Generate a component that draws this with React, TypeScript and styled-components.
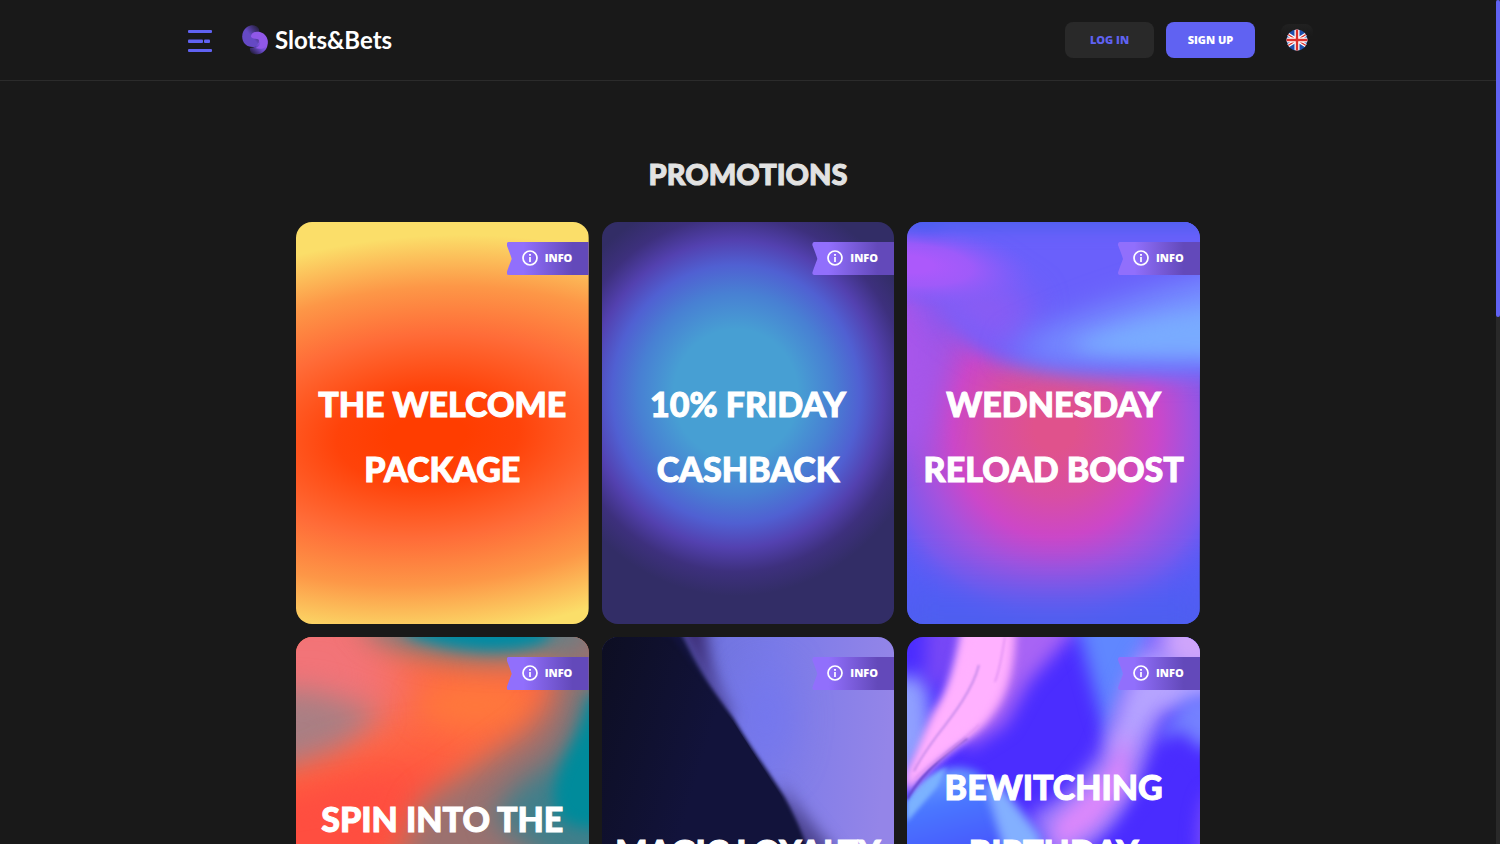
import React from "react";
import styled, { createGlobalStyle } from "styled-components";

const GlobalStyle = createGlobalStyle`
  *, *::before, *::after { box-sizing: border-box; }
  body {
    margin: 0;
    background: #191919;
    color: #fff;
    font-family: Lato, "Open Sans", sans-serif;
  }
`;

const Page = styled.div`
  display: grid;
  grid-template-columns: minmax(0, 1fr) 4px;
  height: 100vh;
`;

const Scroller = styled.div`
  overflow-y: auto;
  scrollbar-width: none;
`;

const Track = styled.div`
  background: #292929;
`;

const Thumb = styled.div`
  height: 37.5%;
  border-radius: 2px;
  background: #6062f2;
`;

const Header = styled.header`
  border-bottom: 1px solid #2b2b2b;
`;

const HeaderInner = styled.div`
  display: flex;
  align-items: center;
  max-width: 1130px;
  height: 80px;
  margin: 0 auto;
`;

const IconButton = styled.button`
  display: flex;
  padding: 4px 5px;
  border: 0;
  background: none;
  cursor: pointer;
`;

const Brand = styled.a`
  display: flex;
  align-items: center;
  gap: 7px;
  margin: 0 auto 0 25px;
  color: #fff;
  font-size: 24px;
  font-weight: 700;
  line-height: 32px;
  text-decoration: none;
`;

const Actions = styled.div`
  display: flex;
  align-items: center;
  gap: 12px;
`;

const ActionButton = styled.button<{ $primary?: boolean }>`
  width: 89px;
  height: 36px;
  padding: 0 0 2px;
  border: 0;
  border-radius: 8px;
  background: ${(p) => (p.$primary ? "#6062f2" : "#292929")};
  color: ${(p) => (p.$primary ? "#fff" : "#6062f2")};
  font-family: "Open Sans", sans-serif;
  font-size: 11px;
  font-weight: 800;
  cursor: pointer;
`;

const LanguageButton = styled.button`
  display: flex;
  align-items: center;
  justify-content: center;
  width: 32px;
  height: 32px;
  margin-left: 14px;
  padding: 0;
  border: 0;
  border-radius: 8px;
  background: linear-gradient(#212121, #191919 40%);
  cursor: pointer;
`;

const Main = styled.main`
  max-width: 904px;
  margin: 0 auto;
  padding: 73px 0 80px;
`;

const Heading = styled.h1`
  margin: 0 0 28px;
  color: #e2e2e2;
  font-size: 29px;
  font-weight: 900;
  line-height: 40px;
  text-align: center;
  text-transform: uppercase;
  -webkit-text-stroke: 1px currentColor;
`;

const Grid = styled.div`
  display: grid;
  grid-template-columns: repeat(3, minmax(0, 1fr));
  gap: 13px;
`;

const Card = styled.article`
  position: relative;
  display: flex;
  align-items: center;
  justify-content: center;
  height: 402px;
  padding-top: 26px;
  border-radius: 16px;
  overflow: hidden;
`;

const Art = styled.svg`
  position: absolute;
  inset: 0;
  width: 100%;
  height: 100%;
`;

const CardTitle = styled.h2`
  position: relative;
  margin: 0;
  color: #fff;
  font-size: 34px;
  font-weight: 900;
  line-height: 65px;
  text-align: center;
  text-transform: uppercase;
  white-space: pre-line;
  -webkit-text-stroke: 1px currentColor;
`;

const InfoLink = styled.a`
  position: absolute;
  top: 20px;
  right: 0;
  display: flex;
  align-items: center;
  gap: 7px;
  width: 82px;
  height: 33px;
  padding: 0 0 1px 15px;
  background: linear-gradient(90deg, #916ffc 20%, #6349ba 80%);
  clip-path: path("M2 0H82V33H2Q0 33 0 31Q0 30 5 17Q5 16 0 3Q0 0 2 0Z");
  color: #fff;
  font-family: "Open Sans", sans-serif;
  font-size: 11px;
  font-weight: 800;
  text-decoration: none;
`;

const InfoLabel = styled.span`
  padding-bottom: 2px;
`;

const MenuIcon = () => (
  <svg width="24" height="26" viewBox="0 0 24 26" fill="#6062f2" aria-hidden="true">
    <rect x="0" y="3" width="24" height="3" rx="1" />
    <rect x="0" y="12.5" width="15" height="3.5" rx="1" />
    <rect x="16" y="12.5" width="6" height="3.5" rx="1" />
    <rect x="0" y="22" width="24" height="3" rx="1" />
  </svg>
);

const LogoMark = () => (
  <svg width="26" height="32" viewBox="0 0 26 32" aria-hidden="true">
    <defs>
      <linearGradient id="tailTop" x1="0.9" y1="0" x2="0.4" y2="0.5">
        <stop offset="0" stopColor="#1f1b30" />
        <stop offset="0.9" stopColor="#6549c4" />
      </linearGradient>
      <linearGradient id="tailBottom" x1="0" y1="0.9" x2="0.7" y2="0.2">
        <stop offset="0" stopColor="#1d1930" />
        <stop offset="0.6" stopColor="#6a4bca" />
        <stop offset="1" stopColor="#9058e8" />
      </linearGradient>
    </defs>
    <path d="M17 5C15 .5 9 .5 5 3C-1 7-1 16 3 20C6 23 11 24 16 22L18 12Z" fill="url(#tailTop)" />
    <path d="M17 15C17 21 13 24 8 24C7 29 12 31 17 30C24 28 27 22 25 15Z" fill="url(#tailBottom)" />
    <path d="M9 13C9 8 14 7 18 8C25 10 27 17 25 21C22 26 17 25 13 24C17 23 20 19 17 16C15 14 12 16 9 13Z" fill="#9058e8" />
  </svg>
);

const FlagIcon = () => (
  <svg width="22" height="22" viewBox="0 0 22 22" aria-hidden="true">
    <defs>
      <clipPath id="flagRound">
        <circle cx="11" cy="11" r="10.5" />
      </clipPath>
    </defs>
    <g clipPath="url(#flagRound)">
      <rect width="22" height="22" fill="#1f50ac" />
      <path d="M-2 3L24 19M24 3L-2 19" stroke="#fff" strokeWidth="3.6" />
      <path d="M-2 3L24 19M24 3L-2 19" stroke="#d9302c" strokeWidth="1.3" />
      <path d="M11 0V22M0 11H22" stroke="#fff" strokeWidth="5" />
      <path d="M11 0V22M0 11H22" stroke="#d9302c" strokeWidth="2.4" />
    </g>
  </svg>
);

const InfoIcon = () => (
  <svg width="16" height="16" viewBox="0 0 16 16" fill="none" stroke="#fff" aria-hidden="true">
    <circle cx="8" cy="8" r="7" strokeWidth="1.7" />
    <path d="M8 7V12" strokeWidth="1.7" />
    <path d="M8 4V5.8" strokeWidth="1.9" />
  </svg>
);

const Blur = ({ id, size }: { id: string; size: number }) => (
  <filter id={id} x="-150%" y="-150%" width="400%" height="400%" colorInterpolationFilters="sRGB">
    <feGaussianBlur stdDeviation={size} />
  </filter>
);

const artProps = { viewBox: "0 0 293 402", preserveAspectRatio: "none", "aria-hidden": true } as const;

const WelcomeArt = () => (
  <Art {...artProps}>
    <defs>
      <radialGradient id="ember" gradientUnits="userSpaceOnUse" cx="0" cy="0" r="1" gradientTransform="translate(132 214) rotate(-4) scale(380 204)">
        <stop offset="0.1" stopColor="#ff3d00" />
        <stop offset="0.24" stopColor="#ff430a" />
        <stop offset="0.5" stopColor="#ff6c38" />
        <stop offset="0.73" stopColor="#fd9747" />
        <stop offset="0.98" stopColor="#fbde69" />
      </radialGradient>
    </defs>
    <rect width="293" height="402" fill="url(#ember)" />
  </Art>
);

const FridayArt = () => (
  <Art {...artProps}>
    <defs>
      <radialGradient id="orb" gradientUnits="userSpaceOnUse" cx="0" cy="0" r="1" gradientTransform="translate(134 172) scale(194 202)">
        <stop offset="0.32" stopColor="#479fd3" />
        <stop offset="0.5" stopColor="#4880d3" />
        <stop offset="0.64" stopColor="#5060d2" />
        <stop offset="0.76" stopColor="#5341b0" />
        <stop offset="0.88" stopColor="#3d307d" />
        <stop offset="1" stopColor="#322d66" />
      </radialGradient>
    </defs>
    <rect width="293" height="402" fill="url(#orb)" />
  </Art>
);

const WednesdayArt = () => (
  <Art {...artProps}>
    <defs>
      <Blur id="wedWide" size={28} />
      <Blur id="wedSoft" size={16} />
      <Blur id="wedThin" size={9} />
      <radialGradient id="rose" gradientUnits="userSpaceOnUse" cx="0" cy="0" r="1" gradientTransform="translate(148 206) scale(205 218)">
        <stop offset="0.1" stopColor="#e0528c" />
        <stop offset="0.32" stopColor="#d84ea4" />
        <stop offset="0.5" stopColor="#cc47c8" />
        <stop offset="0.65" stopColor="#a552de" />
        <stop offset="0.82" stopColor="#7a59ee" />
        <stop offset="1" stopColor="#575cf8" stopOpacity="0" />
      </radialGradient>
      <radialGradient id="violet" gradientUnits="userSpaceOnUse" cx="0" cy="0" r="1" gradientTransform="translate(0 42) rotate(5) scale(130 42)">
        <stop offset="0.2" stopColor="#ac59fb" />
        <stop offset="0.5" stopColor="#a55afa" stopOpacity="0.85" />
        <stop offset="1" stopColor="#7f5efb" stopOpacity="0" />
      </radialGradient>
    </defs>
    <rect width="293" height="402" fill="#575cf8" />
    <rect width="293" height="402" fill="url(#rose)" />
    <path d="M-50 60H20L35 130L20 220L-50 240Z" fill="#a856ea" filter="url(#wedSoft)" />
    <path d="M30 -20H320V150C240 158 150 156 100 140C72 128 55 115 40 90Z" fill="#6a60fb" filter="url(#wedThin)" />
    <path d="M10 40H70L130 80L100 135L60 112L20 80Z" fill="#885cf4" filter="url(#wedSoft)" />
    <rect width="160" height="120" fill="url(#violet)" />
    <path d="M330 50C250 65 140 105 100 130C170 148 280 140 330 142Z" fill="#7794ff" filter="url(#wedSoft)" />
    <path d="M330 85C260 90 190 110 165 126C210 136 280 132 330 134Z" fill="#79abff" filter="url(#wedThin)" />
    <rect x="-30" y="-30" width="353" height="36" fill="#4c60ee" filter="url(#wedThin)" />
    <rect x="-30" y="375" width="353" height="70" fill="#4b5fee" filter="url(#wedWide)" />
  </Art>
);

const SpinArt = () => (
  <Art {...artProps}>
    <defs>
      <Blur id="spinWide" size={24} />
      <Blur id="spinSoft" size={14} />
      <Blur id="spinThin" size={7} />
    </defs>
    <rect width="293" height="402" fill="#ff6a42" />
    <path d="M-60 -40H70L120 60L60 100H-60Z" fill="#f27478" filter="url(#spinWide)" />
    <path d="M-60 50L20 54L85 76L40 115L-60 150Z" fill="#a97f84" filter="url(#spinSoft)" />
    <path d="M-60 170L60 130L170 115L60 280H-60Z" fill="#ff4e40" filter="url(#spinWide)" />
    <path d="M-60 175L30 160L90 150L50 280H-60Z" fill="#ff4e40" filter="url(#spinSoft)" />
    <ellipse cx="180" cy="68" rx="56" ry="22" fill="#ff783c" filter="url(#spinSoft)" />
    <path d="M330 -20H252L258 60L235 92L180 130L125 165L100 230L140 420H330Z" fill="#9b716f" filter="url(#spinSoft)" />
    <path d="M330 50H288C278 110 262 125 225 145L195 180L270 240H330Z" fill="#3f7f8b" filter="url(#spinSoft)" />
    <path d="M330 60H294C285 105 260 125 258 160C262 190 275 192 330 192Z" fill="#008b9b" filter="url(#spinThin)" />
    <path d="M60 -20H310L270 16C210 30 130 22 80 0Z" fill="#5d8189" filter="url(#spinSoft)" />
    <path d="M108 -20H262L250 4C220 18 160 16 112 -2Z" fill="#008ba3" filter="url(#spinThin)" />
  </Art>
);

const MagicArt = () => (
  <Art {...artProps}>
    <defs>
      <Blur id="magicSoft" size={8} />
      <Blur id="magicEdge" size={2} />
      <Blur id="magicHaze" size={20} />
      <linearGradient id="lilac" x1="0.3" y1="0" x2="1" y2="0.1">
        <stop offset="0" stopColor="#6e72dc" />
        <stop offset="0.4" stopColor="#797ae8" />
        <stop offset="1" stopColor="#9485e8" />
      </linearGradient>
      <linearGradient id="night" x1="0" y1="0" x2="0.5" y2="0.3">
        <stop offset="0" stopColor="#0d0e22" />
        <stop offset="1" stopColor="#12133b" />
      </linearGradient>
    </defs>
    <rect width="293" height="402" fill="url(#lilac)" />
    <ellipse cx="165" cy="80" rx="20" ry="50" fill="#7376f0" filter="url(#magicHaze)" />
    <path d="M70 -20H104C104 28 116 56 131 81L120 80Z" fill="#3b2c74" filter="url(#magicSoft)" />
    <path d="M176 145L234 216V240H200Z" fill="#4c4490" filter="url(#magicSoft)" />
    <path d="M-20 -20H72C90 20 108 52 130 81C146 108 164 134 181 160C194 184 202 204 210 235V422H-20Z" fill="#12133b" filter="url(#magicEdge)" />
    <path d="M0 0H70C90 30 112 57 131 82C147 110 166 134 182 160C194 182 204 204 212 230V402H0Z" fill="url(#night)" filter="url(#magicEdge)" />
    <path d="M0 0H60L131 84L180 160L204 240V402H0Z" fill="url(#night)" />
  </Art>
);

const BirthdayArt = () => (
  <Art {...artProps}>
    <defs>
      <Blur id="bdSoft" size={9} />
      <Blur id="bdMid" size={5} />
      <Blur id="bdThin" size={2} />
      <Blur id="bdLine" size={1} />
      <linearGradient id="petal" x1="0" y1="0" x2="1" y2="0">
        <stop offset="0" stopColor="#f9a2f6" />
        <stop offset="0.5" stopColor="#ffb1ff" />
        <stop offset="1" stopColor="#ee9af8" />
      </linearGradient>
      <linearGradient id="lagoon" x1="0" y1="0" x2="0.3" y2="1">
        <stop offset="0" stopColor="#80b4ff" />
        <stop offset="0.4" stopColor="#4a78ff" />
        <stop offset="1" stopColor="#4650fc" />
      </linearGradient>
    </defs>
    <rect width="293" height="402" fill="#4b2dff" />
    <path d="M-40 40H20L26 110L-40 190Z" fill="#90a0ff" filter="url(#bdSoft)" />
    <path d="M20 -20H65L40 50L18 48Z" fill="#7848f6" filter="url(#bdSoft)" />
    <path d="M95 -30H190L150 14L122 45L98 88L60 112L50 90Z" fill="#a864f5" filter="url(#bdSoft)" />
    <path d="M165 -30H250L245 40L205 110L192 70L178 18Z" fill="#6087ff" filter="url(#bdSoft)" />
    <path d="M320 -30H255L215 50L190 120L160 155L120 180L150 230L215 190C240 150 240 110 262 75L320 45Z" fill="#9579fc" filter="url(#bdSoft)" />
    <path d="M320 20H235L220 60L204 110L218 125L250 72L320 60Z" fill="#b6a4ff" filter="url(#bdSoft)" />
    <path d="M222 90L195 140L145 185L150 215L190 190L222 150Z" fill="#dc88fb" filter="url(#bdSoft)" />
    <ellipse cx="290" cy="5" rx="32" ry="25" fill="#cfa5fb" filter="url(#bdSoft)" />
    <path d="M330 55L280 58L252 98L275 110L330 115Z" fill="#7582ff" filter="url(#bdSoft)" />
    <path d="M275 92C255 105 250 135 235 155C220 180 195 200 190 240H290L310 150Z" fill="#4a2cff" filter="url(#bdSoft)" />
    <ellipse cx="306" cy="205" rx="14" ry="50" fill="#8253f8" filter="url(#bdSoft)" />
    <path d="M-10 176C20 132 45 124 72 136C92 160 105 195 110 240H-10Z" fill="url(#lagoon)" filter="url(#bdMid)" />
    <path d="M0 165C12 146 24 138 40 130L30 150L0 185Z" fill="#7bb2ff" filter="url(#bdThin)" />
    <path d="M78 148L92 145L134 200V240H105Z" fill="#83b0ff" filter="url(#bdMid)" />
    <path d="M54 -10H109C108 40 99 64 78 87C54 109 20 128 0 156V136C12 118 18 96 26 76C42 52 48 24 54 -10Z" fill="url(#petal)" filter="url(#bdMid)" />
    <path d="M62 -10H104C104 36 94 62 74 84C52 106 20 124 0 154V140C12 118 20 96 32 76C48 52 54 24 62 -10Z" fill="#ffb1ff" filter="url(#bdMid)" />
    <path d="M60 101C36 118 14 138 0 162" fill="none" stroke="#5f3bc4" strokeWidth="2" filter="url(#bdLine)" />
    <path d="M72 28C66 52 48 76 29 100C18 115 12 124 7 134" fill="none" stroke="#c78bea" strokeWidth="2" filter="url(#bdLine)" />
    <path d="M98 0C95 20 92 35 88 45M72 88C56 106 30 120 8 142" fill="none" stroke="#e597f5" strokeWidth="2" filter="url(#bdLine)" />
  </Art>
);

const promotions = [
  { id: "welcome", title: "The Welcome\nPackage", Picture: WelcomeArt },
  { id: "friday", title: "10% Friday\nCashback", Picture: FridayArt },
  { id: "wednesday", title: "Wednesday\nReload Boost", Picture: WednesdayArt },
  { id: "spin", title: "Spin into the\nWeekend", Picture: SpinArt },
  { id: "loyalty", title: "Magic Loyalty", Picture: MagicArt },
  { id: "birthday", title: "Bewitching\nBirthday\nBonus", Picture: BirthdayArt },
];

export default function App() {
  return (
    <Page>
      <GlobalStyle />
      <Scroller>
        <Header>
          <HeaderInner>
            <IconButton type="button" aria-label="Open menu">
              <MenuIcon />
            </IconButton>
            <Brand href="#home">
              <LogoMark />
              Slots&amp;Bets
            </Brand>
            <Actions>
              <ActionButton type="button">LOG IN</ActionButton>
              <ActionButton type="button" $primary>
                SIGN UP
              </ActionButton>
              <LanguageButton type="button" aria-label="Language: English">
                <FlagIcon />
              </LanguageButton>
            </Actions>
          </HeaderInner>
        </Header>
        <Main>
          <Heading>Promotions</Heading>
          <Grid>
            {promotions.map(({ id, title, Picture }) => (
              <Card key={id}>
                <Picture />
                <CardTitle>{title}</CardTitle>
                <InfoLink href={`#${id}`}>
                  <InfoIcon />
                  <InfoLabel>INFO</InfoLabel>
                </InfoLink>
              </Card>
            ))}
          </Grid>
        </Main>
      </Scroller>
      <Track aria-hidden="true">
        <Thumb />
      </Track>
    </Page>
  );
}
